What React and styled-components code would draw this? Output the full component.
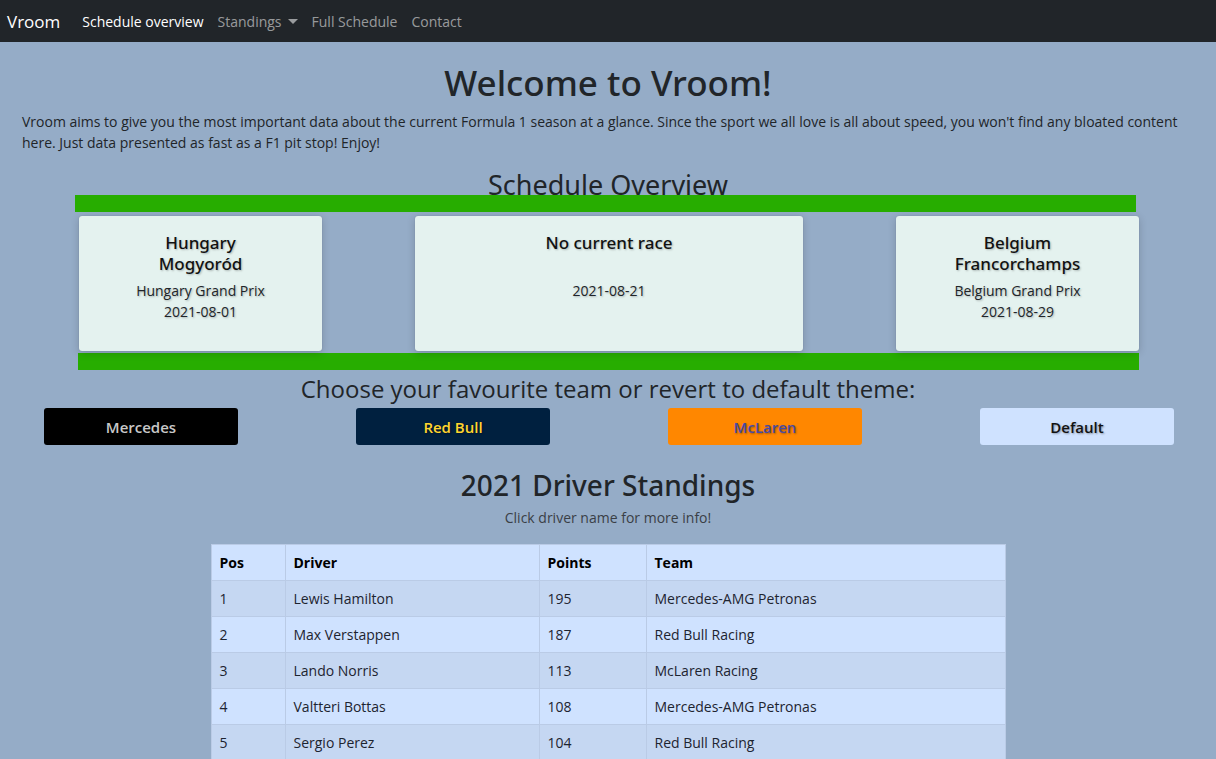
import React from "react";
import styled, { createGlobalStyle } from "styled-components";

const Global = createGlobalStyle`
  html, body { margin: 0; padding: 0; }
  body {
    background: #95acc7;
    font-family: "Open Sans", "Noto Sans", sans-serif;
    color: #212529;
  }
  * { box-sizing: border-box; }
`;

const Nav = styled.nav`
  height: 42px;
  background: #212529;
  display: flex;
  align-items: center;
  padding: 0 7px;
`;
const Brand = styled.a`
  color: #fff;
  font-size: 17px;
  margin-right: 15px;
  text-decoration: none;
`;
const NavLink = styled.a`
  color: ${(p) => (p.$active ? "#fff" : "rgba(255,255,255,0.55)")};
  font-size: 14px;
  font-weight: ${(p) => (p.$active ? 500 : 400)};
  padding: 0 7px;
  text-decoration: none;
  display: flex;
  align-items: center;
  gap: 6px;
`;
const Caret = styled.span`
  display: inline-block;
  border-top: 5px solid rgba(255,255,255,0.55);
  border-left: 5px solid transparent;
  border-right: 5px solid transparent;
`;

const Main = styled.main`
  padding: 0 22px;
`;
const H1 = styled.h1`
  font-family: "Noto Sans", sans-serif;
  font-weight: 500;
  font-size: 35px;
  text-align: center;
  margin: 19px 0 0;
  line-height: 44px;
`;
const Intro = styled.p`
  font-size: 14px;
  line-height: 21px;
  margin: 6px 0 0;
`;
const H2 = styled.h2`
  font-family: "Noto Sans", sans-serif;
  font-weight: 400;
  font-size: 27px;
  text-align: center;
  margin: 15px 0 0;
  line-height: 34px;
  height: 27px;
`;
const Schedule = styled.section`
  margin: 0 58px 0 53px;
`;
const Bar = styled.div`
  height: 17px;
  background: #27ad00;
  margin-left: ${(p) => p.$shift || 0}px;
  margin-right: ${(p) => -(p.$shift || 0)}px;
`;
const Cards = styled.div`
  display: grid;
  grid-template-columns: 243px 388px 243px;
  justify-content: space-between;
  padding: 4px 0 2px 4px;
  margin-right: -3px;
`;
const Card = styled.div`
  background: #e4f2ef;
  border-radius: 3px;
  height: 135px;
  box-shadow: 0 2px 8px rgba(0,0,0,0.18), 0 0 1px rgba(0,0,0,0.25);
  text-align: center;
  padding-top: 16px;
  text-shadow: 1px 1px 2px rgba(0,0,0,0.25);
`;
const CardTitle = styled.h5`
  font-family: "Noto Sans", sans-serif;
  font-weight: 500;
  font-size: 17px;
  line-height: 21px;
  min-height: 42px;
  margin: 0 0 6px;
  color: #111;
`;
const CardLine = styled.div`
  font-size: 14px;
  line-height: 21px;
`;

const Choose = styled.h3`
  font-weight: 400;
  font-size: 24px;
  text-align: center;
  margin: 4px 0 0;
  line-height: 30px;
`;
const Teams = styled.div`
  display: grid;
  grid-template-columns: repeat(4, 194px);
  justify-content: space-between;
  margin: 4px 20px 0 22px;
`;
const TeamBtn = styled.button`
  height: 37px;
  border: none;
  border-radius: 3px;
  background: ${(p) => p.$bg};
  color: ${(p) => p.$fg};
  font-family: "Open Sans", sans-serif;
  font-size: 15px;
  font-weight: 600;
  text-shadow: 1px 1px 2px rgba(0,0,0,0.35);
`;

const Standings = styled.h2`
  font-family: "Noto Sans", sans-serif;
  font-weight: 500;
  font-size: 28px;
  text-align: center;
  margin: 20px 0 0;
  line-height: 40px;
`;
const Hint = styled.p`
  text-align: center;
  font-size: 14px;
  color: #3a3f46;
  margin: 3px 0 16px;
  line-height: 20px;
`;
const Table = styled.table`
  width: 795px;
  margin: 0 auto;
  border-collapse: collapse;
  font-size: 14px;
  color: #1d2430;
`;
const Th = styled.th`
  text-align: left;
  font-weight: 700;
  background: #cfe2ff;
  border: 1px solid #bacbe6;
  padding: 0 8px;
  height: 36px;
  color: #000;
  width: ${(p) => p.$w}px;
`;
const Tr = styled.tr`
  background: ${(p) => (p.$odd ? "#c5d7f2" : "#cfe2ff")};
`;
const Td = styled.td`
  border: 1px solid #bacbe6;
  padding: 0 8px;
  height: 36px;
`;

const races = [
  { title: ["Hungary", "Mogyoród"], gp: "Hungary Grand Prix", date: "2021-08-01" },
  { title: ["No current race"], gp: null, date: "2021-08-21" },
  { title: ["Belgium", "Francorchamps"], gp: "Belgium Grand Prix", date: "2021-08-29" },
];

const drivers = [
  [1, "Lewis Hamilton", 195, "Mercedes-AMG Petronas"],
  [2, "Max Verstappen", 187, "Red Bull Racing"],
  [3, "Lando Norris", 113, "McLaren Racing"],
  [4, "Valtteri Bottas", 108, "Mercedes-AMG Petronas"],
  [5, "Sergio Perez", 104, "Red Bull Racing"],
];

export default function App() {
  return (
    <>
      <Global />
      <Nav>
        <Brand>Vroom</Brand>
        <NavLink $active>Schedule overview</NavLink>
        <NavLink>Standings <Caret /></NavLink>
        <NavLink>Full Schedule</NavLink>
        <NavLink>Contact</NavLink>
      </Nav>
      <Main>
        <H1>Welcome to Vroom!</H1>
        <Intro>
          Vroom aims to give you the most important data about the current Formula 1 season at a glance. Since the sport we all love is all about speed, you won't find any bloated content here. Just data presented as fast as a F1 pit stop! Enjoy!
        </Intro>
        <H2>Schedule Overview</H2>
        <Schedule>
          <Bar />
          <Cards>
            {races.map((r, i) => (
              <Card key={i}>
                <CardTitle>
                  {r.title.map((t, j) => (
                    <div key={j}>{t}</div>
                  ))}
                </CardTitle>
                {r.gp && <CardLine>{r.gp}</CardLine>}
                <CardLine>{r.date}</CardLine>
              </Card>
            ))}
          </Cards>
          <Bar $shift={3} />
        </Schedule>
        <Choose>Choose your favourite team or revert to default theme:</Choose>
        <Teams>
          <TeamBtn $bg="#000" $fg="#c8c8c8">Mercedes</TeamBtn>
          <TeamBtn $bg="#00203f" $fg="#ffd52e">Red Bull</TeamBtn>
          <TeamBtn $bg="#ff8700" $fg="#474aa6">McLaren</TeamBtn>
          <TeamBtn $bg="#cfe2ff" $fg="#111">Default</TeamBtn>
        </Teams>
        <Standings>2021 Driver Standings</Standings>
        <Hint>Click driver name for more info!</Hint>
        <Table>
          <thead>
            <tr>
              <Th $w={74}>Pos</Th>
              <Th $w={254}>Driver</Th>
              <Th $w={107}>Points</Th>
              <Th>Team</Th>
            </tr>
          </thead>
          <tbody>
            {drivers.map((d, i) => (
              <Tr key={i} $odd={i % 2 === 0}>
                {d.map((c, j) => (
                  <Td key={j}>{c}</Td>
                ))}
              </Tr>
            ))}
          </tbody>
        </Table>
      </Main>
    </>
  );
}
